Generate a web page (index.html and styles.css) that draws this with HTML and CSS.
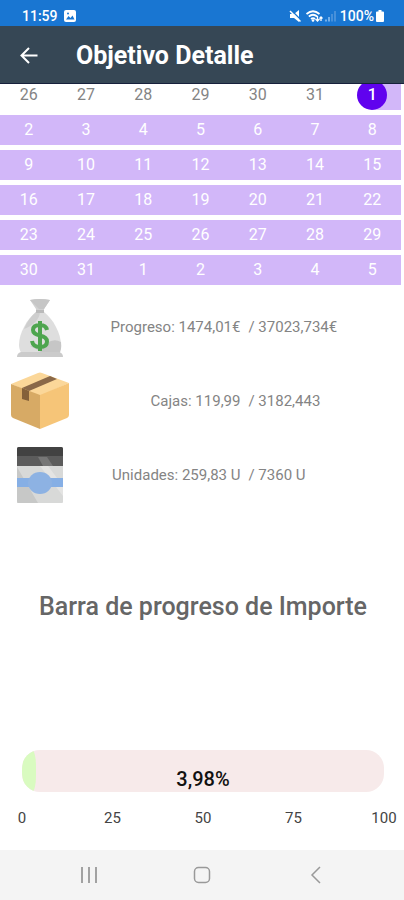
FILE: index.html
```html
<!DOCTYPE html>
<html lang="es">
<head>
<meta charset="utf-8">
<meta name="viewport" content="width=device-width, initial-scale=1">
<title>Objetivo Detalle</title>
<link rel="stylesheet" href="styles.css">
</head>
<body>
<div class="status">
  <span class="status-group">
    <span>11:59</span>
    <svg class="photo-icon" viewBox="0 0 12 12" width="12" height="12"><rect width="12" height="12" rx="2" fill="#fff"/><path d="M2 9.5 4.5 6l2 2L8.500 5.500 10.500 9.500z" fill="#1976d2"/><circle cx="4" cy="3.500" r="1" fill="#1976d2"/></svg>
  </span>
  <span class="status-group status-right">
    <svg class="system-icons" viewBox="0 0 49 14" width="49" height="14">
      <path d="M1 5h4l5-4v12L5 9H1z" fill="#fff"/>
      <path d="M2 1 12 11" stroke="#1976d2" stroke-width="1.500"/>
      <path d="M1 2 11.500 12.500" stroke="#fff" stroke-width="1.500"/>
      <g fill="none" stroke="#fff" stroke-width="1.700"><path d="M17.500 5Q24-.5 30.500 5M19.800 7.500Q24 4 28.200 7.500M22 10Q24 8.300 26 10"/><path d="M28.500 7v5m-2-2 2 2 2-2M32 12V8m-1.500 1.500L32 8l1.500 1.500" stroke-width="1.300"/></g>
      <circle cx="24" cy="11.500" r="1.300" fill="#fff"/>
      <path d="M36 12.500v-2h2v2zM39 12.500V8h2v4.500z" fill="#75afe8"/><path d="M42 12.500V5h2v7.500zM45 12.500V2h2v10.500z" fill="#4790da"/>
    </svg>
    <span>100%</span>
    <svg viewBox="0 0 8 12" width="8" height="12"><path d="M2.500 0h3v1.500H7q1 0 1 1V11q0 1-1 1H1q-1 0-1-1V2.500q0-1 1-1h1.500z" fill="#fff"/></svg>
  </span>
</div>
<header class="app-bar">
  <button class="icon-button" type="button" aria-label="Volver"><svg viewBox="0 0 18 18" width="18" height="18"><path d="M17.500 8.500H2M9 1 1.500 8.500 9 16" fill="none" stroke="#fff" stroke-width="2"/></svg></button>
  <h1>Objetivo Detalle</h1>
</header>
<main>
  <div class="calendar">
    <table>
      <tbody>
        <tr class="outside"><td>26</td><td>27</td><td>28</td><td>29</td><td>30</td><td>31</td><td class="start"><span>1</span></td></tr>
        <tr><td>2</td><td>3</td><td>4</td><td>5</td><td>6</td><td>7</td><td>8</td></tr>
        <tr><td>9</td><td>10</td><td>11</td><td>12</td><td>13</td><td>14</td><td>15</td></tr>
        <tr><td>16</td><td>17</td><td>18</td><td>19</td><td>20</td><td>21</td><td>22</td></tr>
        <tr><td>23</td><td>24</td><td>25</td><td>26</td><td>27</td><td>28</td><td>29</td></tr>
        <tr><td>30</td><td>31</td><td>1</td><td>2</td><td>3</td><td>4</td><td>5</td></tr>
      </tbody>
    </table>
  </div>
  <section class="stats">
    <div class="stat">
      <svg viewBox="0 0 60 60" width="60" height="60">
        <path d="M26 15h8c9 7 17 21 17 33 0 4-2 8-3 9H12c-1-1-3-5-3-9 0-12 8-26 17-33z" fill="#dedede"/>
        <path d="M20 49q11 1 17-3 7-5 14-1 1 8-2 12H34q-7-5-14-8z" fill="#c6c6c6"/>
        <path d="M26 15h4q-1 11-16 17 4-10 12-17z" fill="#cecece"/>
        <path d="M20 3q10-2 20 0l-6 9v4h-8v-4z" fill="#d2d2d2"/><path d="M20 3q10-2 20 0l-6 9h-5z" fill="#c6c6c6"/><path d="M26 13h8v3h-8z" fill="#bababa"/>
        <path d="M11 55h38q4 1 4 5H7q0-4 4-5z" fill="#cbcbcb"/>
        <path d="M37 33q-1-5-7-5-7 0-7 5 0 4 7 5.500 7 1.500 7 6 0 5.500-7 5.500-7 0-8-6M30 24v30" fill="none" stroke="#4ea54f" stroke-width="4"/>
      </svg>
      <span class="current">Progreso: 1474,01€</span><span class="goal">/ 37023,734€</span>
    </div>
    <div class="stat">
      <svg viewBox="0 0 60 60" width="60" height="60">
        <path d="M1 13 28 2q2-1 4 0l27 10-29 13z" fill="#fbd799"/><path d="M1 13 30 24v34L3 47q-2-1-2-3z" fill="#d7aa65"/><path d="m30 24 29-12v32q0 2-2 3L30 58z" fill="#f6c578"/>
        <path d="m12 17 28-12 7 3-28 12z" fill="#8a6848"/><path d="m12 17 7 3v10l-7-2z" fill="#846039"/>
      </svg>
      <span class="current">Cajas: 119,99</span><span class="goal">/ 3182,443</span>
    </div>
    <div class="stat">
      <svg viewBox="0 0 60 60" width="60" height="60">
        <rect x="7" y="19" width="46" height="39" rx="1" fill="#d8d9d8"/><path d="M7 22 28 58H8q-1 0-1-2z" fill="#c7c8c7"/><path d="M30 21h8l15 20v10z" fill="#e4e4e3"/>
        <path d="M7 4q0-2 2-2h42q2 0 2 2v17H7z" fill="#5c5c5c"/><path d="M7 4q0-2 2-2h42q2 0 2 2v7H7z" fill="#424242"/><path d="M28 12h9l6 9H33z" fill="#777"/>
        <path d="M7 33h46v9H7z" fill="#86afe5"/><ellipse cx="30" cy="38" rx="12" ry="11" fill="#8db2e3"/>
      </svg>
      <span class="current">Unidades: 259,83 U</span><span class="goal">/ 7360 U</span>
    </div>
  </section>
  <section class="progress">
    <h2>Barra de progreso de Importe</h2>
    <div class="bar" role="progressbar" aria-label="Importe" aria-valuenow="3.98" aria-valuemin="0" aria-valuemax="100">
      <div class="fill" style="width:3.98%"></div>
      <span class="percent">3,98%</span>
    </div>
    <div class="scale"><span>0</span><span>25</span><span>50</span><span>75</span><span>100</span></div>
  </section>
</main>
<nav class="system-nav">
  <button class="icon-button" type="button" aria-label="Recientes"><svg viewBox="0 0 18 18" width="18" height="18"><path d="M2 1v16M9 1v16M16 1v16" stroke="#a2a2a2" stroke-width="2"/></svg></button>
  <button class="icon-button" type="button" aria-label="Inicio"><svg viewBox="0 0 18 18" width="18" height="18"><rect x="1.500" y="1.500" width="15" height="15" rx="4" fill="none" stroke="#999" stroke-width="1.500"/></svg></button>
  <button class="icon-button" type="button" aria-label="Atrás"><svg viewBox="0 0 18 18" width="18" height="18"><path d="M14 1 6 9l8 8" fill="none" stroke="#999" stroke-width="1.500"/></svg></button>
</nav>
</body>
</html>
```
FILE: styles.css
```css
* {
  box-sizing: border-box;
}

body {
  margin: 0;
  min-height: 100vh;
  display: flex;
  flex-direction: column;
  background: #fff;
  color: #848484;
  font-family: Roboto, "Liberation Sans", sans-serif;
}

svg {
  display: block;
  flex: none;
}

h1,
h2 {
  margin: 0;
}

.icon-button {
  display: flex;
  align-items: center;
  justify-content: center;
  padding: 0;
  border: 0;
  background: none;
}

.status {
  display: flex;
  justify-content: space-between;
  height: 26px;
  padding: 6px 20px 0 22px;
  background: #1976d2;
  color: #fff;
  font-size: 14px;
  font-weight: 500;
  line-height: 20px;
}

.status-group {
  display: flex;
  align-items: center;
  gap: 6px;
}

.status-right {
  gap: 2px;
}

.app-bar {
  display: flex;
  align-items: center;
  gap: 38px;
  height: 58px;
  padding: 2px 20px 0;
  border-bottom: 1px solid #17213c;
  background: #364755;
  color: #fff;
}

.app-bar h1 {
  font-size: 25px;
  font-weight: 700;
  line-height: 32px;
}

main {
  flex: 1;
  display: flex;
  flex-direction: column;
}

.calendar {
  overflow: hidden;
  padding-right: 3px;
}

.calendar table {
  width: 100%;
  margin-top: -9px;
  table-layout: fixed;
  border-spacing: 0 5px;
}

.calendar td {
  height: 30px;
  padding: 0;
  background: #d2b7f9;
  color: #fff;
  font-size: 16px;
  line-height: 30px;
  text-align: center;
}

.calendar .outside td {
  background: #fff;
  color: #848484;
}

.calendar .outside .start {
  background: linear-gradient(to right, #fff 50%, #d2b7f9 50%);
}

.start span {
  display: block;
  width: 30px;
  margin: 0 auto;
  border-radius: 50%;
  background: #6002ee;
  color: #fff;
  font-weight: 500;
}

.stat {
  display: grid;
  grid-template-columns: 60px 7fr 6fr;
  align-items: center;
  height: 74px;
  padding: 0 10px;
  font-size: 15px;
  line-height: 20px;
}

.current {
  padding-right: 4px;
  text-align: right;
}

.goal {
  padding-left: 4px;
}

.progress {
  flex: 1;
  display: flex;
  flex-direction: column;
  padding: 0 20px 22px 22px;
}

.progress h2 {
  margin: auto 0;
  color: #666;
  font-size: 25px;
  font-weight: 500;
  line-height: 32px;
  text-align: center;
}

.bar {
  display: grid;
  height: 42px;
  margin-top: 48px;
  overflow: hidden;
  border-radius: 18px;
  background: #f7eaea;
}

.fill,
.percent {
  grid-area: 1 / 1;
}

.fill {
  border-radius: 10px 4px 4px 10px / 20px 16px 16px 20px;
  background: #d9fbc0;
}

.percent {
  padding-top: 16px;
  color: #111;
  font-size: 20px;
  font-weight: 500;
  line-height: 26px;
  text-align: center;
}

.scale {
  display: flex;
  justify-content: space-between;
  margin: 16px -15px 0;
  color: #444;
  font-size: 15px;
  line-height: 20px;
}

.scale span {
  width: 30px;
  text-align: center;
}

.system-nav {
  display: flex;
  justify-content: center;
  gap: 95px;
  height: 50px;
  background: #f4f4f4;
}
```
